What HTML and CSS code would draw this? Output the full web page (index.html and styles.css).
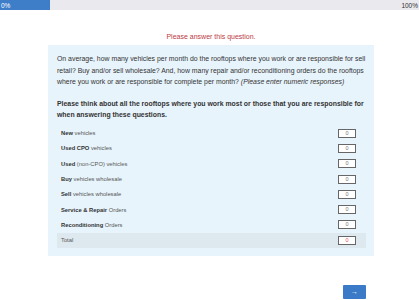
FILE: index.html
```html
<!DOCTYPE html>
<html lang="en">
<head>
    <meta charset="UTF-8">
    <meta name="viewport" content="width=device-width, initial-scale=1.0">
    <title>Survey</title>
    <link rel="stylesheet" href="styles.css">
</head>
<body>

    <div class="progress">
        <div class="progress-fill"><span>0%</span></div>
        <span class="progress-end">100%</span>
    </div>

    <div class="page">
        <p class="error-text">Please answer this question.</p>

        <div class="question-box">
            <p class="question-text">On average, how many vehicles per month do the rooftops where you work or are responsible for sell retail? Buy and/or sell wholesale? And, how many repair and/or reconditioning orders do the rooftops where you work or are responsible for complete per month? <em>(Please enter numeric responses)</em></p>

            <p class="question-note">Please think about all the rooftops where you work most or those that you are responsible for when answering these questions.</p>

            <div class="answer-list">
                <div class="answer-row"><span><b>New</b> vehicles</span><span class="num-box">0</span></div>
                <div class="answer-row"><span><b>Used CPO</b> vehicles</span><span class="num-box">0</span></div>
                <div class="answer-row"><span><b>Used</b> (non-CPO) vehicles</span><span class="num-box">0</span></div>
                <div class="answer-row"><span><b>Buy</b> vehicles wholesale</span><span class="num-box">0</span></div>
                <div class="answer-row"><span><b>Sell</b> vehicles wholesale</span><span class="num-box">0</span></div>
                <div class="answer-row"><span><b>Service &amp; Repair</b> Orders</span><span class="num-box">0</span></div>
                <div class="answer-row"><span><b>Reconditioning</b> Orders</span><span class="num-box">0</span></div>
                <div class="answer-row total-row"><span>Total</span><span class="num-box total-box">0</span></div>
            </div>
        </div>

        <div class="nav-row">
            <button class="next-button">&rarr;</button>
        </div>
    </div>

</body>
</html>
```

FILE: styles.css
```css
body {
    margin: 0;
    font-family: "Liberation Sans", Arial, sans-serif;
    background-color: #ffffff;
    color: #333;
}

/* progress bar at the top */
.progress {
    display: flex;
    justify-content: space-between;
    align-items: center;
    height: 10px;
    background-color: #e9e9ee;
    font-size: 6.5px;
}
.progress-fill {
    width: 50px;
    height: 100%;
    background-color: #3e7ec9;
    color: #fff;
    display: flex;
    align-items: center;
    padding-left: 1px;
    box-sizing: border-box;
}
.progress-end {
    padding-right: 1px;
    color: #333;
}

.page {
    width: 326px;
    margin-left: 48px;
}

.error-text {
    margin: 23px 0 5px;
    text-align: center;
    font-size: 7px;
    color: #bd3a45;
}

.question-box {
    background-color: #e8f4fc;
    padding: 8px 8px 8px 9px;
}

.question-text {
    margin: 0;
    font-size: 6.9px;
    line-height: 11.5px;
    color: #333;
}

.question-note {
    margin: 10px 0 0;
    font-size: 6.9px;
    line-height: 11.5px;
    font-weight: bold;
    color: #333;
}

.answer-list {
    margin-top: 5px;
}

.answer-row {
    display: flex;
    justify-content: space-between;
    align-items: center;
    height: 15.3px;
    padding: 0 10px 0 4px;
    font-size: 5.8px;
    color: #555;
}
.answer-row b {
    color: #333;
}

.num-box {
    width: 16px;
    height: 7px;
    border: 1px solid #666;
    background-color: #fff;
    font-size: 5.5px;
    line-height: 7px;
    text-align: center;
    color: #777;
}

.total-row {
    background-color: #dde8ef;
}
.total-box {
    color: #e0544f;
}

.nav-row {
    display: flex;
    justify-content: flex-end;
    margin-top: 29px;
    padding-right: 8px;
}
.next-button {
    width: 23px;
    height: 14px;
    padding: 0;
    border: none;
    border-radius: 1px;
    background-color: #3a7ac6;
    color: #fff;
    font-size: 7px;
    line-height: 14px;
}
```
